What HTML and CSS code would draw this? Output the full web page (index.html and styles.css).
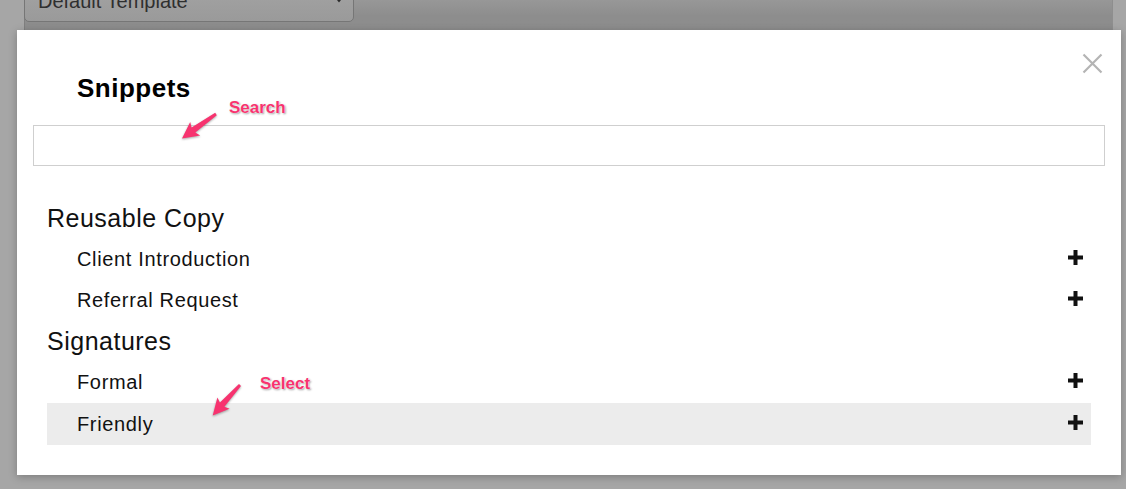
FILE: index.html
```html
<!DOCTYPE html>
<html lang="en">
<head>
<meta charset="utf-8">
<title>Snippets</title>
<link rel="stylesheet" href="styles.css">
</head>
<body>
<div class="page">
  <div class="template-select">
    <span class="template-label">Default Template</span>
    <svg class="caret" width="10" height="14" viewBox="0 0 10 14"><path d="M1 2.5 L5 -1.5 L9 2.5 Z" fill="#2a2a2a"/><path d="M1 5.5 L9 5.5 L5 10.5 Z" fill="#2a2a2a"/></svg>
  </div>
</div>

<div class="modal">
  <button class="close" aria-label="Close">
    <svg width="21" height="21" viewBox="0 0 21 21"><path d="M1.5 1.5 L19.5 19.5 M19.5 1.5 L1.5 19.5" stroke="#b4b4b4" stroke-width="2.2" fill="none"/></svg>
  </button>
  <h2 class="title">Snippets</h2>
  <input class="search" type="text">
  <ul class="snippets">
    <li class="group-title">Reusable Copy</li>
    <li class="item"><span>Client Introduction</span><svg class="plus" width="15" height="15" viewBox="0 0 15 15"><rect x="5.5" y="0" width="4" height="15"/><rect x="0" y="5.5" width="15" height="4"/></svg></li>
    <li class="item"><span>Referral Request</span><svg class="plus" width="15" height="15" viewBox="0 0 15 15"><rect x="5.5" y="0" width="4" height="15"/><rect x="0" y="5.5" width="15" height="4"/></svg></li>
    <li class="group-title">Signatures</li>
    <li class="item"><span>Formal</span><svg class="plus" width="15" height="15" viewBox="0 0 15 15"><rect x="5.5" y="0" width="4" height="15"/><rect x="0" y="5.5" width="15" height="4"/></svg></li>
    <li class="item item-active"><span>Friendly</span><svg class="plus" width="15" height="15" viewBox="0 0 15 15"><rect x="5.5" y="0" width="4" height="15"/><rect x="0" y="5.5" width="15" height="4"/></svg></li>
  </ul>

  <svg class="arrows" width="1104" height="445" viewBox="0 0 1104 445">
    <path d="M199.8 85.2 L178.3 102.6 L183.2 105.6 L165 108.5 L173.2 92 L174.6 97.4 L198.2 82.8 Z"/>
    <path d="M224 356 L207.4 376.8 L212.6 378.8 L195.7 385.5 L200.4 367.6 L202.9 372.6 L222 354 Z"/>
  </svg>
  <span class="note note-search">Search</span>
  <span class="note note-select">Select</span>
</div>
</body>
</html>
```

FILE: styles.css
```css
html, body {
  margin: 0;
  padding: 0;
}

body {
  width: 1126px;
  height: 489px;
  overflow: hidden;
  background: #a6a6a6;
  font-family: "Liberation Sans", Arial, sans-serif;
  position: relative;
}

.page {
  margin-left: 24px;
  width: 1089px;
  height: 489px;
  box-sizing: border-box;
  border-left: 1px solid #7f7f7f;
  border-right: 1px solid #8e8e8e;
  background: linear-gradient(to bottom, #a3a3a3 0, #8d8d8d 34px, #8a8a8a 100%);
}

.template-select {
  width: 330px;
  height: 40px;
  margin-top: -18px;
  margin-left: -1px;
  box-sizing: border-box;
  border: 1px solid #767676;
  border-radius: 5px;
  background: linear-gradient(to bottom, #a4a4a4, #9a9a9a);
  display: flex;
  align-items: center;
  justify-content: space-between;
  padding: 0 9px 0 13px;
}

.template-label {
  font-size: 20px;
  color: #2f2f2f;
  margin-top: -2px;
}

.caret {
  margin-top: -6px;
}

.modal {
  position: absolute;
  left: 17px;
  top: 30px;
  width: 1104px;
  height: 445px;
  box-sizing: border-box;
  background: #fff;
  padding: 43px 0 0;
  box-shadow: 0 2px 8px rgba(0, 0, 0, 0.25);
}

.close {
  position: absolute;
  right: 18px;
  top: 23px;
  width: 21px;
  height: 21px;
  padding: 0;
  border: 0;
  background: none;
  display: block;
}

.close svg {
  display: block;
}

.title {
  margin: 0 0 22px 60px;
  font-size: 26px;
  line-height: 30px;
  font-weight: bold;
  color: #000;
  letter-spacing: 0.5px;
}

.search {
  display: block;
  margin: 0 16px;
  width: 1072px;
  height: 41px;
  box-sizing: border-box;
  border: 1px solid #cfcfcf;
  padding: 0 10px;
  font-family: inherit;
  font-size: 18px;
  outline: none;
}

.snippets {
  list-style: none;
  margin: 32px 30px 0;
  padding: 0;
}

.group-title {
  font-size: 25px;
  line-height: 41px;
  height: 41px;
  color: #111;
  letter-spacing: 0.5px;
}

.item {
  height: 41px;
  line-height: 41px;
  font-size: 20px;
  color: #111;
  padding: 0 8px 0 30px;
  display: flex;
  align-items: center;
  justify-content: space-between;
  letter-spacing: 0.65px;
}

.item-active {
  background: #ececec;
  height: 42px;
}

.plus {
  fill: #111;
  margin-bottom: 4px;
}

.arrows {
  position: absolute;
  left: 0;
  top: 0;
  pointer-events: none;
  fill: #f7336f;
  filter: drop-shadow(0 1px 1px rgba(0, 0, 0, 0.35));
}

.note {
  position: absolute;
  font-size: 17px;
  line-height: 20px;
  font-weight: bold;
  color: #f7336f;
  text-shadow: 0 0 1px #fff, 0 0 2px #fff, 1px 1px 2px rgba(0, 0, 0, 0.45);
}

.note-search {
  left: 212px;
  top: 68px;
}

.note-select {
  left: 243px;
  top: 344px;
}
```
